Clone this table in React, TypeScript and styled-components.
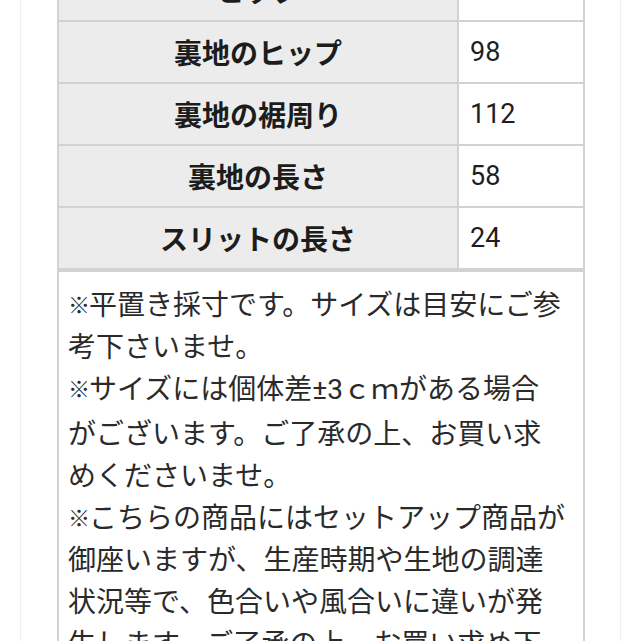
import React from "react";
import styled, { createGlobalStyle } from "styled-components";

const Global = createGlobalStyle`
  html, body {
    margin: 0;
    padding: 0;
    background: #ffffff;
    overflow: hidden;
  }
  body {
    font-family: "Noto Sans CJK JP", "Noto Sans", sans-serif;
  }
`;

const Page = styled.div`
  width: 641px;
  height: 641px;
  overflow: hidden;
  background: #ffffff;
`;

const Frame = styled.div`
  margin: -42px 20px 0 20px;
  padding: 0 35px 0 36px;
  border-left: 1px solid #f1f1f1;
  border-right: 1px solid #f1f1f1;
  min-height: 800px;
`;

const Grid = styled.div`
  display: grid;
  grid-template-columns: 398px 1fr;
  gap: 2px;
  padding: 2px;
  background: #d2d2d2;
`;

const HeadCell = styled.div`
  height: 60px;
  background: #ececec;
  display: flex;
  align-items: center;
  justify-content: center;
  font-family: "Noto Sans CJK JP", sans-serif;
  font-weight: 700;
  font-size: 28px;
  color: #1c1c1c;
`;

const ValueCell = styled.div`
  height: 60px;
  background: #ffffff;
  display: flex;
  align-items: center;
  padding-left: 11px;
  font-family: Roboto, "Noto Sans", sans-serif;
  font-size: 27px;
  color: #1e1e1e;
`;

const Note = styled.div`
  border: 2px solid #d2d2d2;
  padding: 10px 8px 0 9px;
  background: #ffffff;
`;

const Line = styled.div`
  white-space: nowrap;
  font-family: "Noto Sans CJK JP", sans-serif;
  font-size: 28px;
  line-height: 42px;
  color: #2a2a2a;
`;

const Mark = styled.span`
  font-size: 22px;
  display: inline-block;
  width: 21px;
  vertical-align: 2px;
`;

const Latin = styled.span`
  font-family: Roboto, "Noto Sans", sans-serif;
`;

const rows: [string, string][] = [
  ["ヒップ", "94"],
  ["裏地のヒップ", "98"],
  ["裏地の裾周り", "112"],
  ["裏地の長さ", "58"],
  ["スリットの長さ", "24"],
];

const lines: React.ReactNode[] = [
  <><Mark>※</Mark>平置き採寸です。サイズは目安にご参</>,
  "考下さいませ。",
  <><Mark>※</Mark>サイズには個体差<Latin>±3</Latin>ｃｍがある場合</>,
  "がございます。ご了承の上、お買い求",
  "めくださいませ。",
  <><Mark>※</Mark>こちらの商品にはセットアップ商品が</>,
  "御座いますが、生産時期や生地の調達",
  "状況等で、色合いや風合いに違いが発",
  "生します。ご了承の上、お買い求め下",
  "さいませ。",
];

export default function App() {
  return (
    <Page>
      <Global />
      <Frame>
        <Grid>
          {rows.map(([k, v]) => (
            <React.Fragment key={k}>
              <HeadCell>{k}</HeadCell>
              <ValueCell>{v}</ValueCell>
            </React.Fragment>
          ))}
        </Grid>
        <Note>
          {lines.map((l, i) => (
            <Line key={i}>{l}</Line>
          ))}
        </Note>
      </Frame>
    </Page>
  );
}
